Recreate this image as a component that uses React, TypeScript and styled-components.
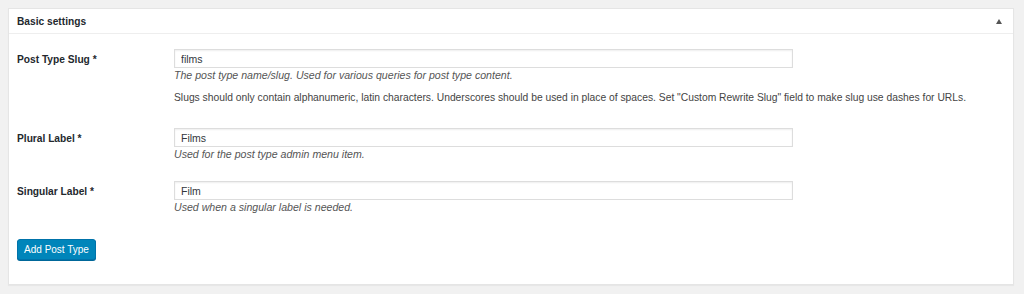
import React from "react";
import styled, { createGlobalStyle } from "styled-components";

const Global = createGlobalStyle`
  html, body { margin: 0; padding: 0; background: #f1f1f1; }
  body { font-family: "Liberation Sans", Arial, sans-serif; color: #444; font-size: 10.3px; }
  * { box-sizing: border-box; }
`;

const Page = styled.div`
  padding: 8px 10px 10px 8px;
`;

const Panel = styled.section`
  background: #fff;
  border: 1px solid #e5e5e5;
  box-shadow: 0 1px 1px rgba(0, 0, 0, 0.04);
`;

const Header = styled.header`
  display: flex;
  align-items: center;
  justify-content: space-between;
  height: 25px;
  padding: 0 9px 0 8px;
  border-bottom: 1px solid #eee;
`;

const Title = styled.h2`
  margin: 0;
  font-size: 10.2px;
  font-weight: 700;
  color: #23282d;
`;

const Toggle = styled.span`
  width: 0;
  height: 0;
  border-left: 3.5px solid transparent;
  border-right: 3.5px solid transparent;
  border-bottom: 5px solid #555;
  margin-right: 2px;
`;

const Body = styled.div`
  padding: 15px 8px 24px 8px;
`;

const Row = styled.div<{ $after: number }>`
  display: grid;
  grid-template-columns: 157px 619px;
  margin-bottom: ${(p) => p.$after}px;
`;

const Label = styled.label`
  font-weight: 700;
  color: #23282d;
  font-size: 10.2px;
  line-height: 14px;
  padding-top: 4px;
`;

const Field = styled.div`
  display: flex;
  flex-direction: column;
`;

const Input = styled.input`
  width: 619px;
  height: 19px;
  margin: 0;
  padding: 0 6px;
  border: 1px solid #ddd;
  box-shadow: inset 0 1px 2px rgba(0, 0, 0, 0.07);
  font-family: "Liberation Sans", Arial, sans-serif;
  font-size: 10.5px;
  color: #32373c;
  outline: none;
`;

const Desc = styled.p`
  margin: 0;
  font-style: italic;
  color: #555;
  font-size: 10.6px;
  line-height: 14px;
  white-space: nowrap;
`;

const Note = styled.p`
  margin: 9px 0 0 0;
  color: #444;
  font-size: 10.3px;
  line-height: 14px;
  white-space: nowrap;
`;

const Button = styled.button`
  display: block;
  width: 79px;
  height: 21px;
  padding: 0;
  background: #0085ba;
  border: 1px solid #0073aa;
  border-radius: 3px;
  box-shadow: 0 1px 0 #006799;
  color: #fff;
  font-family: "Liberation Sans", Arial, sans-serif;
  font-size: 10px;
  cursor: pointer;
`;

export default function App() {
  return (
    <>
      <Global />
      <Page>
        <Panel>
          <Header>
            <Title>Basic settings</Title>
            <Toggle />
          </Header>
          <Body>
            <Row $after={23}>
              <Label>Post Type Slug *</Label>
              <Field>
                <Input defaultValue="films" />
                <Desc>The post type name/slug. Used for various queries for post type content.</Desc>
                <Note>
                  Slugs should only contain alphanumeric, latin characters. Underscores should be used in place of spaces. Set "Custom Rewrite Slug" field to make slug use dashes for URLs.
                </Note>
              </Field>
            </Row>
            <Row $after={20}>
              <Label>Plural Label *</Label>
              <Field>
                <Input defaultValue="Films" />
                <Desc>Used for the post type admin menu item.</Desc>
              </Field>
            </Row>
            <Row $after={25}>
              <Label>Singular Label *</Label>
              <Field>
                <Input defaultValue="Film" />
                <Desc>Used when a singular label is needed.</Desc>
              </Field>
            </Row>
            <Button>Add Post Type</Button>
          </Body>
        </Panel>
      </Page>
    </>
  );
}
